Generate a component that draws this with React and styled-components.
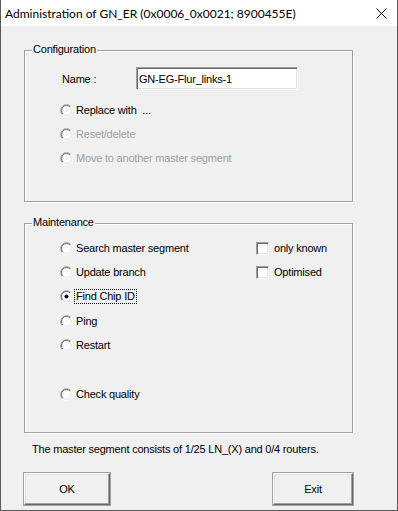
import React from 'react';
import styled, { createGlobalStyle } from 'styled-components';

const Global = createGlobalStyle`
  html, body { margin: 0; padding: 0; background: #f0f0f0; }
  body { font-family: "Liberation Sans", Arial, sans-serif; }
`;

const Window = styled.div`
  width: 398px;
  height: 511px;
  box-sizing: border-box;
  border: 1px solid #5a5a5a;
  border-top: none;
  display: flex;
  flex-direction: column;
  background: #f0f0f0;
`;

const TitleBar = styled.div`
  height: 26px;
  flex: none;
  background: #fff;
  display: flex;
  align-items: center;
  justify-content: space-between;
  padding: 0 10px 0 4px;
  font-family: Lato, "Liberation Sans", sans-serif;
  font-size: 12px;
  color: #000;
`;

const Client = styled.div`
  flex: 1;
  display: flex;
  flex-direction: column;
  padding: 0 44px 0 23px;
  font-size: 11px;
  letter-spacing: -0.2px;
  color: #000;
`;

const GroupBox = styled.div`
  box-sizing: border-box;
  margin-top: ${p => p.$top}px;
  height: ${p => p.$h}px;
  border: 1px solid #a0a0a0;
  box-shadow: inset 1px 1px 0 #fff, 1px 1px 0 #fff;
  display: flex;
  flex-direction: column;
`;

const Legend = styled.span`
  align-self: flex-start;
  margin: -8px 0 0 7px;
  padding: 0 1px;
  line-height: 13px;
  background: #f0f0f0;
`;

const NameRow = styled.div`
  display: flex;
  align-items: center;
  margin-top: 11px;
  padding-left: 37px;
`;

const NameLabel = styled.span`
  width: 74px;
`;

const Input = styled.input`
  box-sizing: border-box;
  width: 162px;
  height: 23px;
  margin: 0;
  padding: 0 0 0 2px;
  border: 1px solid;
  border-color: #a0a0a0 #fff #fff #a0a0a0;
  box-shadow: inset 1px 1px 0 #696969, inset -1px -1px 0 #e3e3e3;
  background: #fff;
  font-family: "Liberation Sans", Arial, sans-serif;
  font-size: 11px;
  letter-spacing: -0.2px;
  color: #000;
  outline: none;
`;

const RadioList = styled.div`
  display: flex;
  flex-direction: column;
  margin-top: 8px;
  padding-left: 35px;
`;

const Row = styled.div`
  height: 24px;
  display: flex;
  align-items: center;
  color: ${p => (p.$disabled ? '#a0a0a0' : '#000')};
`;

const Label = styled.span`
  margin-left: ${p => p.$gap}px;
  padding: 0 1px;
  line-height: 13px;
  outline: ${p => (p.$focus ? '1px dotted #000' : 'none')};
  outline-offset: 0;
`;

const MaintGrid = styled.div`
  display: grid;
  grid-template-columns: 196px auto;
  grid-template-rows: 24px 24px 25px 24px 24px 25px 24px;
  margin-top: 7px;
  padding-left: 35px;
`;

const Cell = styled(Row)`
  grid-column: ${p => p.$col};
  grid-row: ${p => p.$row};
  height: auto;
`;

const Box = styled.span`
  box-sizing: border-box;
  width: 13px;
  height: 13px;
  flex: none;
  border: 1px solid;
  border-color: #a0a0a0 #fff #fff #a0a0a0;
  box-shadow: inset 1px 1px 0 #696969, inset -1px -1px 0 #e3e3e3;
  background: #fff;
`;

const Status = styled.div`
  margin-top: 10px;
  padding-left: 8px;
  line-height: 13px;
`;

const ButtonRow = styled.div`
  display: flex;
  justify-content: space-between;
  margin-top: 17px;
`;

const Button = styled.button`
  box-sizing: border-box;
  width: ${p => p.$w}px;
  height: 32px;
  margin: 0;
  padding: 0;
  border: 1px solid;
  border-color: #fff #696969 #696969 #fff;
  box-shadow: inset -1px -1px 0 #a0a0a0, inset 1px 1px 0 #e3e3e3;
  outline: 1px solid #a0a0a0;
  outline-offset: 0;
  background: #f0f0f0;
  font-family: "Liberation Sans", Arial, sans-serif;
  font-size: 11px;
  letter-spacing: -0.2px;
  color: #000;
`;

const Radio = ({ checked }) => (
  <svg width="13" height="13" viewBox="0 0 13 13" style={{ flex: 'none' }}>
    <circle cx="6.5" cy="6.5" r="5.5" fill="#fff" />
    <path d="M2.26 10.74 A6 6 0 0 1 10.74 2.26" stroke="#a0a0a0" fill="none" />
    <path d="M10.74 2.26 A6 6 0 0 1 2.26 10.74" stroke="#fff" fill="none" />
    <path d="M2.96 10.04 A5 5 0 0 1 10.04 2.96" stroke="#696969" fill="none" />
    <path d="M10.04 2.96 A5 5 0 0 1 2.96 10.04" stroke="#e3e3e3" fill="none" />
    {checked && <circle cx="6.5" cy="6.5" r="2" fill="#000" />}
  </svg>
);

const CloseIcon = () => (
  <svg width="11" height="11" viewBox="0 0 11 11">
    <path d="M0.5 0.5 L10.5 10.5 M10.5 0.5 L0.5 10.5" stroke="#000" strokeWidth="1" />
  </svg>
);

export default function App() {
  return (
    <>
      <Global />
      <Window>
        <TitleBar>
          <span>Administration of GN_ER (0x0006_0x0021; 8900455E)</span>
          <CloseIcon />
        </TitleBar>
        <Client>
          <GroupBox $top={24} $h={152}>
            <Legend>Configuration</Legend>
            <NameRow>
              <NameLabel>Name :</NameLabel>
              <Input defaultValue="GN-EG-Flur_links-1" />
            </NameRow>
            <RadioList>
              <Row>
                <Radio />
                <Label $gap={2}>Replace with&nbsp; ...</Label>
              </Row>
              <Row $disabled>
                <Radio />
                <Label $gap={2}>Reset/delete</Label>
              </Row>
              <Row $disabled>
                <Radio />
                <Label $gap={2}>Move to another master segment</Label>
              </Row>
            </RadioList>
          </GroupBox>

          <GroupBox $top={21} $h={210}>
            <Legend>Maintenance</Legend>
            <MaintGrid>
              <Cell $col={1} $row={1}><Radio /><Label $gap={2}>Search master segment</Label></Cell>
              <Cell $col={2} $row={1}><Box /><Label $gap={4}>only known</Label></Cell>
              <Cell $col={1} $row={2}><Radio /><Label $gap={2}>Update branch</Label></Cell>
              <Cell $col={2} $row={2}><Box /><Label $gap={4}>Optimised</Label></Cell>
              <Cell $col={1} $row={3}><Radio checked /><Label $gap={2} $focus>Find Chip ID</Label></Cell>
              <Cell $col={1} $row={4}><Radio /><Label $gap={2}>Ping</Label></Cell>
              <Cell $col={1} $row={5}><Radio /><Label $gap={2}>Restart</Label></Cell>
              <Cell $col={1} $row={7}><Radio /><Label $gap={2}>Check quality</Label></Cell>
            </MaintGrid>
          </GroupBox>

          <Status>The master segment consists of 1/25 LN_(X) and 0/4 routers.</Status>

          <ButtonRow>
            <Button $w={86}>OK</Button>
            <Button $w={80}>Exit</Button>
          </ButtonRow>
        </Client>
      </Window>
    </>
  );
}
